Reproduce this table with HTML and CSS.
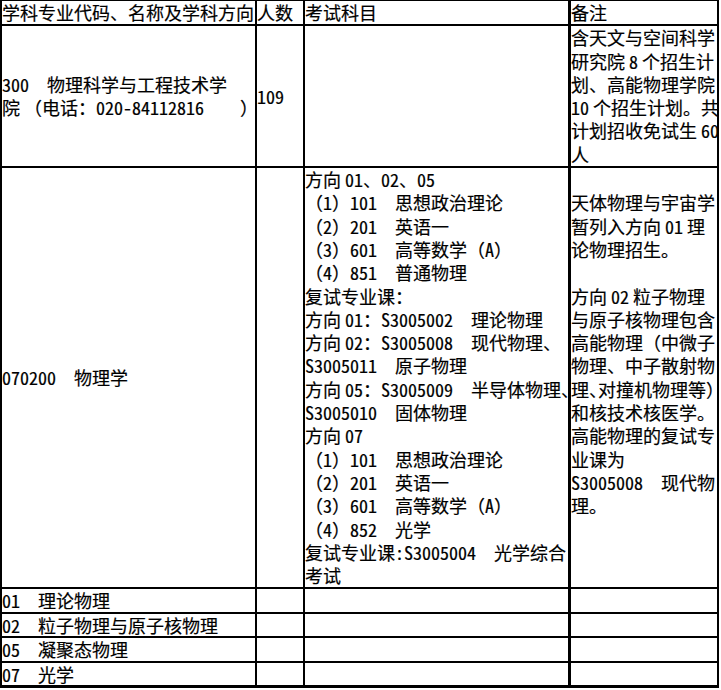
FILE: index.html
```html
<!DOCTYPE html>
<html lang="zh-CN">
<head>
<meta charset="utf-8">
<title>招生计划</title>
<link rel="stylesheet" href="styles.css">
</head>
<body>
<table class="plan">
  <tr class="head">
    <td class="c1">学科专业代码、名称及学科方向</td>
    <td class="c2">人数</td>
    <td class="c3">考试科目</td>
    <td class="c4">备注</td>
  </tr>
  <tr class="school">
    <td class="mid"><span class="n">300</span>　物理科学与工程技术学<br>院 （电话：<span class="n">020-84112816</span>　　）</td>
    <td class="mid"><span class="n">109</span></td>
    <td class="c3"></td>
    <td>含天文与空间科学<br>研究院 <span class="n">8</span> 个招生计<br>划、高能物理学院<br><span class="n">10</span> 个招生计划。共<br>计划招收免试生 <span class="n">60</span><br>人</td>
  </tr>
  <tr class="major">
    <td class="mid"><span class="n">070200</span>　物理学</td>
    <td></td>
    <td class="c3">方向 <span class="n">01</span>、<span class="n">02</span>、<span class="n">05</span><br>（<span class="n">1</span>）<span class="n">101</span>　思想政治理论<br>（<span class="n">2</span>）<span class="n">201</span>　英语一<br>（<span class="n">3</span>）<span class="n">601</span>　高等数学（<span class="n">A</span>）<br>（<span class="n">4</span>）<span class="n">851</span>　普通物理<br>复试专业课：<br>方向 <span class="n">01</span>：<span class="n">S3005002</span>　理论物理<br>方向 <span class="n">02</span>：<span class="n">S3005008</span>　现代物理、<br><span class="n">S3005011</span>　原子物理<br>方向 <span class="n">05</span>：<span class="n">S3005009</span>　半导体物理<span class="halt">、</span><br><span class="n">S3005010</span>　固体物理<br>方向 <span class="n">07</span><br>（<span class="n">1</span>）<span class="n">101</span>　思想政治理论<br>（<span class="n">2</span>）<span class="n">201</span>　英语一<br>（<span class="n">3</span>）<span class="n">601</span>　高等数学（<span class="n">A</span>）<br>（<span class="n">4</span>）<span class="n">852</span>　光学<br>复试专业课<span class="n">:S3005004</span>　光学综合<br>考试</td>
    <td class="remark">天体物理与宇宙学<br>暂列入方向 <span class="n">01</span> 理<br>论物理招生。<br><br>方向 <span class="n">02</span> 粒子物理<br>与原子核物理包含<br>高能物理（中微子<br>物理、中子散射物<br>理<span class="halt">、</span>对撞机物理等）<br>和核技术核医学。<br>高能物理的复试专<br>业课为<br><span class="n">S3005008</span>　现代物<br>理。</td>
  </tr>
  <tr class="dir">
    <td><span class="n">01</span>　理论物理</td><td></td><td class="c3"></td><td></td>
  </tr>
  <tr class="dir">
    <td><span class="n">02</span>　粒子物理与原子核物理</td><td></td><td class="c3"></td><td></td>
  </tr>
  <tr class="dir">
    <td><span class="n">05</span>　凝聚态物理</td><td></td><td class="c3"></td><td></td>
  </tr>
  <tr class="dir last">
    <td><span class="n">07</span>　光学</td><td></td><td class="c3"></td><td></td>
  </tr>
</table>
</body>
</html>
```
FILE: styles.css
```css
html, body {
  margin: 0;
  padding: 0;
  background: #fff;
}

body {
  font-family: "Noto Sans CJK SC", "Noto Sans CJK JP", sans-serif;
  font-size: 18px;
  line-height: 23.3px;
  color: #000;
  -webkit-text-stroke: 0.2px #000;
}

.plan {
  box-sizing: border-box;
  width: 719px;
  table-layout: fixed;
  border-collapse: separate;
  border-spacing: 0;
  border-top: 1px solid #000;
  border-left: 2px solid #000;
}

.plan td {
  box-sizing: border-box;
  padding: 0;
  border-right: 2px solid #000;
  border-bottom: 2px solid #000;
  white-space: nowrap;
  vertical-align: top;
  overflow: visible;
}

.plan td.c1 { width: 255px; }
.plan td.c2 { width: 48px; }
.plan td.c3 { width: 266px; border-right-width: 3px; }
.plan td.c4 { width: 148px; }

.plan td.mid {
  vertical-align: middle;
}

.plan td.remark {
  padding-top: 23.3px;
}

.dir td {
  line-height: 22.5px;
}

.last td {
  border-bottom-width: 3px;
}

/* Latin runs use the font's half-width forms */
.n {
  font-feature-settings: "hwid";
}

.halt {
  font-feature-settings: "halt";
}
```
